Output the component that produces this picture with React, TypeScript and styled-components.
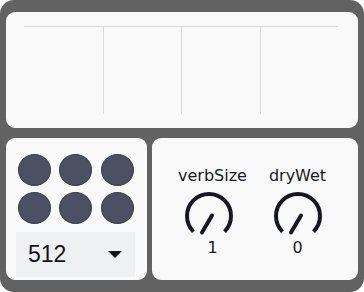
import React from "react";
import styled, { createGlobalStyle } from "styled-components";

const GlobalStyle = createGlobalStyle`
  html, body {
    margin: 0;
    padding: 0;
    background: #ffffff;
  }
  * {
    box-sizing: border-box;
  }
`;

const Shell = styled.div`
  width: 364px;
  height: 292px;
  background: #626262;
  border-radius: 14px;
  padding: 12px 6px 12px 6px;
  display: flex;
  flex-direction: column;
  gap: 10px;
  font-family: "DejaVu Sans", Verdana, sans-serif;
`;

const Panel = styled.div`
  background: #f9f9f9;
  border-radius: 9px;
`;

const TopPanel = styled(Panel)`
  height: 116px;
  padding: 14px 20px 14px 18px;
`;

const Steps = styled.div`
  height: 100%;
  border-top: 1px solid #dcdcdc;
  display: grid;
  grid-template-columns: repeat(4, 1fr);
`;

const Step = styled.div<{ $first?: boolean }>`
  border-left: ${(p) => (p.$first ? "none" : "1px solid #dcdcdc")};
`;

const BottomRow = styled.div`
  height: 142px;
  display: grid;
  grid-template-columns: 141px 1fr;
  gap: 5px;
`;

const PadPanel = styled(Panel)`
  padding: 16px 10px 2px 10px;
  display: flex;
  flex-direction: column;
  gap: 8px;
`;

const PadGrid = styled.div`
  display: grid;
  grid-template-columns: repeat(3, 33px);
  column-gap: 8.5px;
  row-gap: 6px;
  padding-left: 1.5px;
`;

const Pad = styled.div`
  width: 33px;
  height: 32px;
  border-radius: 50%;
  background: #4b5162;
  border: 1px solid #3a3f4b;
`;

const Select = styled.div`
  height: 45px;
  width: 119px;
  background: #eff0f2;
  display: flex;
  align-items: center;
  justify-content: space-between;
  padding: 0 13px 0 12px;
  font-family: "Liberation Sans", Arial, sans-serif;
  font-size: 23px;
  color: #111318;
`;

const Caret = styled.div`
  width: 0;
  height: 0;
  border-left: 7px solid transparent;
  border-right: 7px solid transparent;
  border-top: 7px solid #111318;
`;

const KnobPanel = styled(Panel)`
  display: flex;
  justify-content: center;
  align-items: center;
  gap: 9px;
  padding-top: 4px;
`;

const KnobColumn = styled.div`
  width: 76px;
  display: flex;
  flex-direction: column;
  align-items: center;
`;

const KnobLabel = styled.div`
  font-size: 16px;
  line-height: 20px;
  color: #16181f;
  white-space: nowrap;
`;

const KnobValue = styled.div`
  font-size: 16px;
  line-height: 18px;
  color: #16181f;
  margin-top: 3px;
`;

const KnobSvg = styled.svg<{ $shift: number }>`
  display: block;
  margin-top: 4px;
  margin-left: ${(p) => p.$shift}px;
`;

function Knob({ label, value, shift }: { label: string; value: string; shift: number }) {
  const c = 26;
  const r = 22;
  const a = (135 * Math.PI) / 180;
  const x1 = c - r * Math.sin(a);
  const x2 = c + r * Math.sin(a);
  const y = c - r * Math.cos(a);
  return (
    <KnobColumn>
      <KnobLabel>{label}</KnobLabel>
      <KnobSvg width="52" height="46" viewBox="0 0 52 46" $shift={shift}>
        <path
          d={`M ${x1} ${y} A ${r} ${r} 0 1 1 ${x2} ${y}`}
          fill="none"
          stroke="#151822"
          strokeWidth="4"
        />
        <line x1="29" y1="25.5" x2="19" y2="42.5" stroke="#151822" strokeWidth="4" strokeLinecap="round" />
      </KnobSvg>
      <KnobValue>{value}</KnobValue>
    </KnobColumn>
  );
}

export default function App() {
  return (
    <>
      <GlobalStyle />
      <Shell>
        <TopPanel>
          <Steps>
            {[0, 1, 2, 3].map((i) => (
              <Step key={i} $first={i === 0} />
            ))}
          </Steps>
        </TopPanel>
        <BottomRow>
          <PadPanel>
            <PadGrid>
              {[0, 1, 2, 3, 4, 5].map((i) => (
                <Pad key={i} />
              ))}
            </PadGrid>
            <Select>
              <span>512</span>
              <Caret />
            </Select>
          </PadPanel>
          <KnobPanel>
            <Knob label="verbSize" value="1" shift={-7} />
            <Knob label="dryWet" value="0" shift={0} />
          </KnobPanel>
        </BottomRow>
      </Shell>
    </>
  );
}
